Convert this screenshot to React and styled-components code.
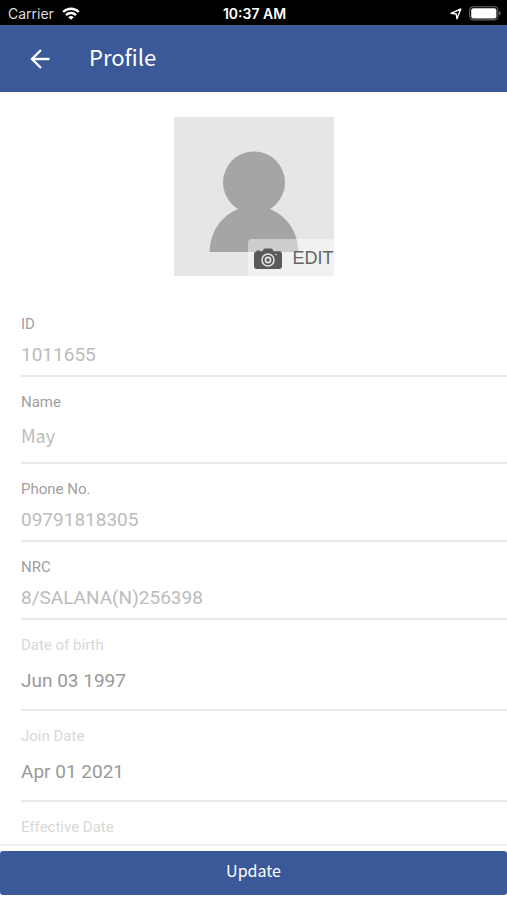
import React from 'react'
import styled, { createGlobalStyle } from 'styled-components'

const fields = [
  { id: 'employee-id', label: 'ID', value: '1011655' },
  { id: 'name', label: 'Name', value: 'May', kind: 'name' },
  { id: 'phone', label: 'Phone No.', value: '09791818305' },
  { id: 'nrc', label: 'NRC', value: '8/SALANA(N)256398' },
  { id: 'birth', label: 'Date of birth', value: 'Jun 03 1997', kind: 'date' },
  { id: 'join', label: 'Join Date', value: 'Apr 01 2021', kind: 'date' },
  { id: 'effective', label: 'Effective Date', value: 'Apr 01 2021', kind: 'date' },
]

const valueHeights = { name: 50, date: 54 }

const WifiIcon = () => (
  <svg width="18" height="13" viewBox="0 0 18 13" fill="none" stroke="#fff" strokeWidth="2.4">
    <path d="M1.2 5A11 11 0 0 1 16.8 5" />
    <path d="M4 8.1A7 7 0 0 1 14 8.1" />
    <path d="M9 12.8L6.2 10.3A4 4 0 0 1 11.8 10.3Z" fill="#fff" stroke="none" />
  </svg>
)

const LocationIcon = () => (
  <svg width="12" height="12" viewBox="0 0 12 12" fill="none" stroke="#fff" strokeWidth="1.4" strokeLinejoin="round">
    <path d="M1 5.4L10.8 1L7 10.8L6.2 6Z" />
  </svg>
)

const BatteryIcon = () => (
  <svg width="32" height="15" viewBox="0 0 32 15">
    <rect x="0.7" y="0.7" width="28.2" height="13.2" rx="3.6" fill="none" stroke="#666" strokeWidth="1.1" />
    <rect x="2.2" y="2.2" width="25.2" height="10.2" rx="2" fill="#fff" />
    <path d="M30 5Q31.6 5.6 31.6 7.3T30 9.6Z" fill="#666" />
  </svg>
)

const BackIcon = () => (
  <svg width="20" height="20" viewBox="0 0 20 20" fill="none" stroke="#fff" strokeWidth="2.4">
    <path d="M19.5 10H2" />
    <path d="M11 1L2 10L11 19" />
  </svg>
)

const Person = () => (
  <svg width="100%" height="100%" viewBox="0 0 160 159" fill="#a5a5a5">
    <circle cx="80" cy="65.5" r="31" />
    <path d="M35.5 135A44.5 46 0 0 1 124.5 135Z" />
  </svg>
)

const CameraIcon = () => (
  <svg width="28" height="22" viewBox="0 0 28 22">
    <path
      d="M2.5 3.6V2.4H6V3.3H8.4L9.8 1Q10.1 .4 10.9 .4H17.1Q17.9 .4 18.2 1L19.6 3.3H25.5Q28 3.3 28 5.7V18.6Q28 21 25.5 21H2.5Q0 21 0 18.6V5.9Q0 3.9 2.5 3.6Z"
      fill="#5a5a5a"
    />
    <circle cx="14" cy="12" r="6" fill="none" stroke="#e8e8e8" strokeWidth="1.5" />
    <circle cx="14" cy="12" r="2.6" fill="none" stroke="#e8e8e8" strokeWidth="1.6" />
    <circle cx="22" cy="6.5" r="0.8" fill="#e8e8e8" />
  </svg>
)

const Field = ({ id, label, value, kind }) => {
  return (
    <Row>
      <Label htmlFor={id} $kind={kind}>
        {label}
      </Label>
      <Value id={id} type="text" defaultValue={value} readOnly $kind={kind} />
    </Row>
  )
}

const App = () => {
  return (
    <>
      <GlobalStyle />
      <Page>
        <StatusBar>
          <Carrier>
            Carrier
            <WifiIcon />
          </Carrier>
          <Time>10:37 AM</Time>
          <StatusIcons>
            <LocationIcon />
            <BatteryIcon />
          </StatusIcons>
        </StatusBar>
        <Header>
          <BackButton type="button" aria-label="Back">
            <BackIcon />
          </BackButton>
          <Title>Profile</Title>
        </Header>
        <Content>
          <Avatar>
            <Person />
            <EditButton type="button">
              <CameraIcon />
              EDIT
            </EditButton>
          </Avatar>
          <Form>
            {fields.map(field => (
              <Field key={field.id} {...field} />
            ))}
          </Form>
        </Content>
        <Footer>
          <UpdateButton type="button">Update</UpdateButton>
        </Footer>
      </Page>
    </>
  )
}

const GlobalStyle = createGlobalStyle`
  * {
    box-sizing: border-box;
  }

  body {
    margin: 0;
    background: #fff;
    font-family: Roboto, sans-serif;
  }

  svg {
    display: block;
    flex: none;
  }
`

const Page = styled.div`
  display: flex;
  flex-direction: column;
  height: 100vh;
`

const StatusBar = styled.div`
  display: grid;
  grid-template-columns: 1fr auto 1fr;
  align-items: center;
  flex: none;
  height: 25px;
  padding: 2px 6px 0 8px;
  background: #000;
  color: #fff;
  font-family: Inter, sans-serif;
  font-size: 14px;
`

const Carrier = styled.div`
  display: flex;
  align-items: center;
  gap: 8px;
  color: #ddd;
`

const Time = styled.div`
  font-weight: 600;
`

const StatusIcons = styled.div`
  display: flex;
  align-items: center;
  justify-content: flex-end;
  gap: 7px;
`

const Header = styled.header`
  display: flex;
  align-items: center;
  flex: none;
  gap: 29px;
  height: 67px;
  padding: 0 20px;
  background: #3b5998;
  color: #fff;
`

const BackButton = styled.button`
  display: flex;
  align-items: center;
  justify-content: center;
  width: 40px;
  height: 40px;
  padding: 0;
  border: 0;
  background: none;
  cursor: pointer;
`

const Title = styled.h1`
  margin: 0;
  padding-bottom: 6px;
  font-family: 'Noto Sans CJK SC', sans-serif;
  font-size: 22px;
  font-weight: 400;
  line-height: 32px;
`

const Content = styled.main`
  flex: 1;
  min-height: 0;
  padding-top: 25px;
  overflow-y: auto;
  scrollbar-width: none;
`

const Avatar = styled.div`
  position: relative;
  width: 160px;
  height: 159px;
  margin: 0 auto;
  background: #e6e6e6;
`

const EditButton = styled.button`
  position: absolute;
  right: 0;
  bottom: 0;
  display: flex;
  align-items: center;
  gap: 10px;
  height: 37px;
  padding: 2px 0 0 6px;
  border: 0;
  border-radius: 4px 0 0 0;
  background: rgba(255, 255, 255, 0.45);
  color: #666;
  font-family: 'Liberation Sans', sans-serif;
  font-size: 18px;
  white-space: nowrap;
  cursor: pointer;
`

const Form = styled.form`
  padding: 23px 0 0 21px;
`

const Row = styled.div`
  display: flex;
  flex-direction: column;
  padding-top: 15px;
  border-bottom: 2px solid #e9e9e9;
`

const Label = styled.label`
  color: ${props => (props.$kind === 'date' ? '#d8d8d8' : '#a0a0a0')};
  font-size: 15px;
  line-height: 20px;
`

const Value = styled.input`
  width: 100%;
  height: ${props => valueHeights[props.$kind] || 41}px;
  padding: ${props => (props.$kind ? '0 0 4px' : '0')};
  border: 0;
  outline: 0;
  background: none;
  color: ${props => (props.$kind === 'date' ? '#999' : '#bcbcbc')};
  font-family: ${props => (props.$kind === 'name' ? "'Noto Sans CJK SC', sans-serif" : 'Roboto, sans-serif')};
  font-size: ${props => (props.$kind === 'name' ? 18 : 19)}px;
`

const Footer = styled.footer`
  flex: none;
  padding: 5px 0;
  border-top: 2px solid #efefef;
`

const UpdateButton = styled.button`
  display: block;
  width: 100%;
  height: 44px;
  padding: 0 0 6px;
  border: 0;
  border-radius: 3px;
  background: #3b5998;
  color: #fff;
  font-family: 'Noto Sans CJK SC', sans-serif;
  font-size: 16px;
  font-weight: 400;
  cursor: pointer;
`

export default App
